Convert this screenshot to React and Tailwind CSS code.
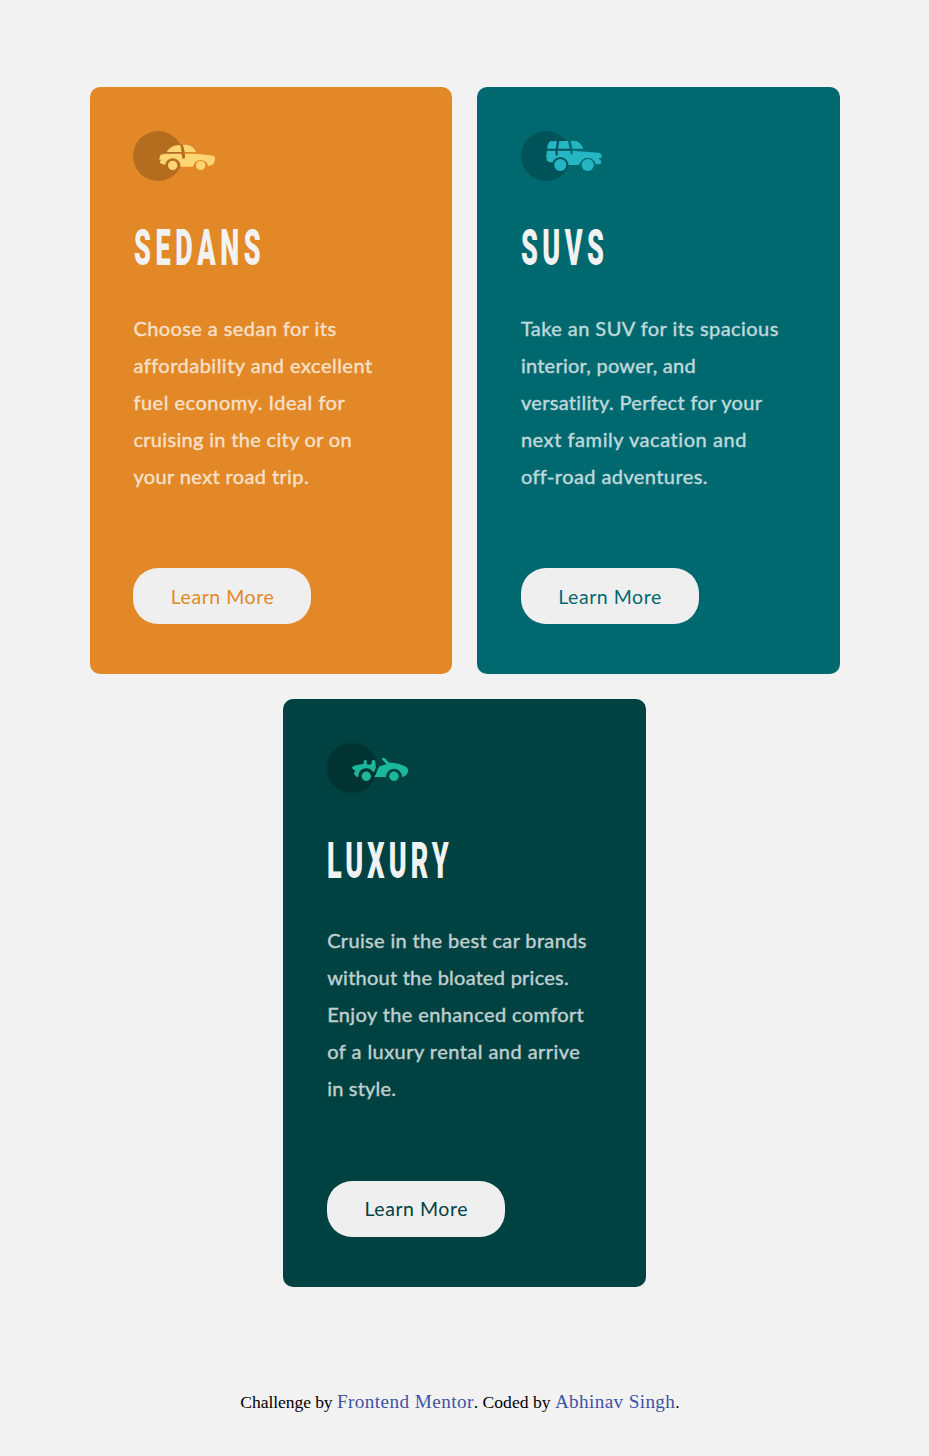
function SedanIcon() {
  return (
    <svg className="block h-[50px] w-[84px]" viewBox="0 0 84 50">
      <circle cx="25" cy="25" r="25" fill="#B46D1E" />
      <g fill="#FFD473">
        <path d="M33.700 21C36.500 16.500 40 14.200 47.300 14L48.600 21Z" />
        <path d="M49.600 13.700C57 13.300 60.500 15.500 63 21H51.400Z" />
        <path d="M27 24.700Q28 23.300 33 22.800H48.600L49.300 26.700Q50.800 28.800 51.900 26.800L51.600 22.800H62L77 24.300Q82 24.600 82 26.700Q82 31.500 79.500 33.800L75.200 35A7.600 7.600 0 0 0 60.200 35.700H47.300A7.600 7.600 0 0 0 32.200 33.800L29.500 33.200Q27 32.500 26.700 30.500L28.500 28.700H26.200Z" />
        <circle cx="39.700" cy="34.400" r="4.700" />
        <circle cx="67.700" cy="34.400" r="4.700" />
      </g>
      <path d="M48.500 14Q51 19 50.700 26.500" fill="none" stroke="#B46D1E" strokeWidth="2.200" strokeLinecap="round" />
    </svg>
  );
}

function SuvIcon() {
  return (
    <svg className="block h-[50px] w-[84px]" viewBox="0 0 84 50">
      <circle cx="25" cy="25" r="25" fill="#005459" />
      <g fill="#26B5C3">
        <path d="M26 17.700C26.700 13.800 27.800 10.700 29.500 10.200L36 10L34.700 17.700Z" />
        <path d="M38.300 10H47L48.700 17.700H37Z" />
        <path d="M49.700 10H54Q59 10 62.300 17.700H51.500Z" />
        <path d="M26 19.800H34.500V24.600H36.700V19.800H49.300L49.800 22.900Q50.700 24.200 51.700 22.700L51.300 19.800L78 21.800L80 22.700Q81.600 25.500 80.500 27H77.500L79.700 29.400L80.500 31.500Q80.200 33 78 33.300H74.800A8.300 8.300 0 0 0 58.600 33.300L56.300 34H47.600A8.300 8.300 0 0 0 31.600 31.400L28 31Q26 30.400 25.300 28.500L27 26.800H25Z" />
        <circle cx="39.300" cy="34" r="6.100" />
        <circle cx="66.700" cy="34" r="6.100" />
      </g>
    </svg>
  );
}

function LuxuryIcon() {
  return (
    <svg className="block h-[50px] w-[84px]" viewBox="0 0 84 50">
      <circle cx="25" cy="25" r="25" fill="#003331" />
      <g fill="#1AB99D">
        <path d="M25 24Q29 21.300 36.800 21L36.500 18.500Q38 16 39.700 17.800V21Q42 22.500 44.500 21L44.800 17.700Q46.500 16 48.200 18L48.900 24.500Q47.800 28.200 46.200 29.300A7.900 7.900 0 0 0 31.400 33.200L30.500 34.300Q27 32.500 27 29L29 28.300Q25.300 26.500 25 24Z" />
        <path d="M54.700 15.800Q56 14 58 15.500L62 19.500Q72 19.800 79.500 24Q82 26.300 81 28.700Q79.500 33 75.700 33.700H75A8 8 0 0 0 59 34H47.200C49.200 31 50.500 26 52.500 23.400Q55.500 22.200 59.500 21.200Z" />
        <circle cx="39.300" cy="33.200" r="4.700" />
        <circle cx="67" cy="33.200" r="4.700" />
      </g>
    </svg>
  );
}

const cards = [
  {
    title: "SEDANS",
    Icon: SedanIcon,
    bg: "bg-[#E28826]",
    ink: "text-[#E28826]",
    heading: "tracking-[8.6px]",
    lines: [
      ["Choose a sedan for its", "tracking-[0.42px]"],
      ["affordability and excellent", "tracking-[0.49px]"],
      ["fuel economy. Ideal for", "tracking-[0.51px]"],
      ["cruising in the city or on", "tracking-[0.32px]"],
      ["your next road trip.", "tracking-[0.38px]"],
    ],
  },
  {
    title: "SUVS",
    Icon: SuvIcon,
    bg: "bg-[#006970]",
    ink: "text-[#006970]",
    heading: "tracking-[8.2px]",
    lines: [
      ["Take an SUV for its spacious", "tracking-[0.44px]"],
      ["interior, power, and", "tracking-[0.25px]"],
      ["versatility. Perfect for your", "tracking-[0.32px]"],
      ["next family vacation and", "tracking-[0.57px]"],
      ["off-road adventures.", "tracking-[0.42px]"],
    ],
  },
  {
    title: "LUXURY",
    Icon: LuxuryIcon,
    bg: "bg-[#004241]",
    ink: "text-[#004241]",
    heading: "tracking-[7.5px]",
    lines: [
      ["Cruise in the best car brands", "tracking-[0.35px]"],
      ["without the bloated prices.", "tracking-[0.24px]"],
      ["Enjoy the enhanced comfort", "tracking-[0.39px]"],
      ["of a luxury rental and arrive", "tracking-[0.46px]"],
      ["in style.", "tracking-[0.2px]"],
    ],
  },
];

function Card({ title, Icon, bg, ink, heading, lines }) {
  return (
    <section className={`h-[587.5px] w-[362.5px] rounded-[10px] px-[43.5px] pt-11 ${bg}`}>
      <Icon />
      <h2
        className={`mt-[37.4px] ml-[0.6px] h-[60px] origin-left scale-x-[0.54] whitespace-nowrap font-['Roboto',sans-serif] text-[50px] leading-[60px] font-black text-[#F2F2F2] ${heading}`}
      >
        {title}
      </h2>
      <p className="mt-[31.6px] pl-[0.4px] font-['Lato',sans-serif] text-[20px] leading-[37px] text-white opacity-75 [-webkit-text-stroke:0.35px_white]">
        {lines.map(([text, tracking]) => (
          <span key={text} className={`block whitespace-nowrap ${tracking}`}>
            {text}
          </span>
        ))}
      </p>
      <button
        className={`mt-[73.4px] flex h-14 w-[178px] items-center justify-center rounded-[25px] bg-[#EFEFEF] pt-[0.8px] pl-[1px] font-['Lato',sans-serif] text-[19.5px] tracking-[0.55px] whitespace-nowrap ${ink}`}
      >
        Learn More
      </button>
    </section>
  );
}

export default function App() {
  return (
    <div className="flex min-h-[1456px] flex-col items-center bg-[#F2F2F2] pt-[86.75px]">
      <main className="flex w-[750px] flex-wrap justify-center gap-[25px]">
        {cards.map((card) => (
          <Card key={card.title} {...card} />
        ))}
      </main>
      <footer className="mt-[101px] mr-[9px] font-['Liberation_Serif',serif] text-[17.6px] leading-7 whitespace-nowrap text-black">
        <span className="tracking-[-0.09px]">Challenge by </span>
        <a className="text-[19.2px] tracking-[0.42px] text-[#3E52A3]">Frontend Mentor</a>. Coded by{" "}
        <a className="text-[19.2px] tracking-[0.36px] text-[#3E52A3]">Abhinav Singh</a>.
      </footer>
    </div>
  );
}
